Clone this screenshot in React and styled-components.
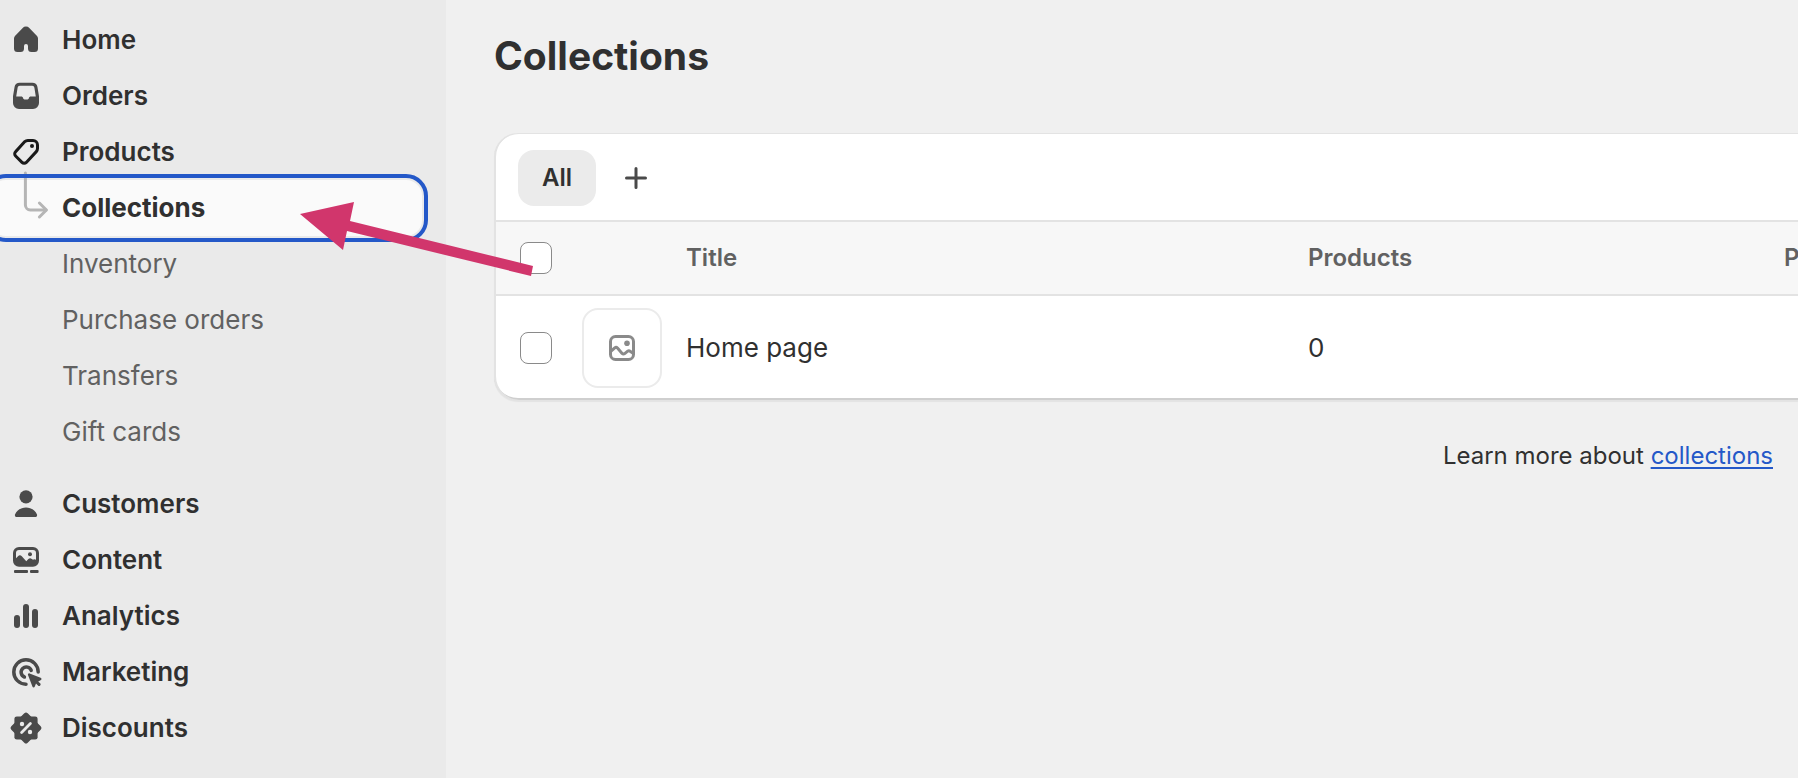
import React from "react";
import styled, { createGlobalStyle } from "styled-components";

const GlobalStyle = createGlobalStyle`
  * {
    box-sizing: border-box;
  }

  body {
    margin: 0;
    background: #f0f0f0;
    color: #303030;
    font-family: Inter, "Liberation Sans", sans-serif;
    font-size: 26px;
    line-height: 40px;
  }
`;

const Page = styled.div`
  position: relative;
  display: flex;
  min-height: 100vh;
  overflow: hidden;
`;

const Sidebar = styled.nav`
  flex: 0 0 446px;
  padding: 12px 24px 20px 0;
  background: #eaeaea;
`;

const NavList = styled.ul`
  margin: 0;
  padding: 0;
  list-style: none;
`;

const SubList = styled(NavList)`
  margin-bottom: 16px;
`;

const NavLink = styled.a`
  display: flex;
  align-items: center;
  gap: 16px;
  height: 56px;
  margin-left: -10px;
  padding-left: 16px;
  border-radius: 16px;
  color: ${props => (props.$sub ? "#616161" : "#303030")};
  font-weight: ${props => (props.$sub ? 400 : 600)};
  text-decoration: none;

  &[aria-current="page"] {
    background: #fafafa;
    color: #303030;
    outline: 4px solid #2458c8;
    outline-offset: 2px;
  }
`;

const SelectedLink = styled(NavLink)`
  font-weight: 700;
`;

const Icon = styled.svg`
  flex: none;
  display: block;
  width: 40px;
  height: 40px;
  overflow: visible;
  color: ${props => props.$color || "#4a4a4a"};
`;

const IconSpace = styled.span`
  flex: none;
  width: 40px;
`;

const Main = styled.main`
  flex: 1;
  min-width: 0;
  padding: 32px 0 0 48px;
`;

const Title = styled.h1`
  margin: 0 0 53px;
  font-size: 39px;
  line-height: 48px;
  font-weight: 700;
`;

const Card = styled.section`
  padding: 1px 0 2px 2px;
  border-radius: 24px 0 0 24px;
  background: #fff;
  box-shadow: inset 1px 1px 0 #e3e3e3, inset 2px 0 0 #e3e3e3,
    inset 0 -2px 0 #cfcfcf, 0 2px 1px rgba(26, 26, 26, 0.06);
`;

const Toolbar = styled.div`
  display: flex;
  align-items: center;
  gap: 20px;
  padding: 16px 22px 14px;
`;

const Tab = styled.button`
  height: 56px;
  padding: 0 24px;
  border: 0;
  border-radius: 16px;
  background: #ebebeb;
  color: #303030;
  font: 600 24px/32px Inter, sans-serif;
`;

const IconButton = styled.button`
  padding: 0;
  border: 0;
  background: none;
`;

const Table = styled.table`
  width: 100%;
  border-collapse: separate;
  border-spacing: 0;
  table-layout: fixed;
`;

const HeadCell = styled.th`
  width: ${props => props.$width || "auto"};
  height: 76px;
  padding: 0;
  border-top: 2px solid #e3e3e3;
  border-bottom: 2px solid #e3e3e3;
  background: #f7f7f7;
  color: #616161;
  font-size: 24px;
  font-weight: 600;
  text-align: left;
  white-space: nowrap;
`;

const Cell = styled.td`
  height: 102px;
  padding: 2px 0 0;
`;

const Checkbox = styled.input`
  appearance: none;
  display: block;
  width: 32px;
  height: 32px;
  margin: 0 0 0 24px;
  border: 1px solid #8a8a8a;
  border-radius: 8px;
  background: #fff;
`;

const Thumbnail = styled.div`
  display: flex;
  align-items: center;
  justify-content: center;
  width: 80px;
  height: 80px;
  border: 2px solid #ebebeb;
  border-radius: 16px;
`;

const Help = styled.p`
  margin: 0;
  padding: 40px 25px 40px 0;
  font-size: 24px;
  line-height: 32px;
  text-align: right;

  a {
    color: #2458c8;
    text-decoration-thickness: 2px;
    text-underline-offset: 3px;
  }
`;

const Arrow = styled.svg`
  position: absolute;
  top: 200px;
  left: 300px;
  width: 236px;
  height: 80px;
  pointer-events: none;
`;

const icons = {
  home: (
    <path
      fill="currentColor"
      d="M8.344 3.992a2.25 2.25 0 0 1 3.312 0l3.854 3.99a1.88 1.88 0 0 1 .49 1.268v5a1.75 1.75 0 0 1-1.75 1.75h-1.5a1.75 1.75 0 0 1-1.75-1.75v-1.25a1 1 0 1 0-2 0v1.25a1.75 1.75 0 0 1-1.75 1.75h-1.5a1.75 1.75 0 0 1-1.75-1.75v-5c0-.47.174-.922.49-1.268z"
    />
  ),
  orders: (
    <path
      fill="currentColor"
      fillRule="evenodd"
      d="M6.8 3.4h6.4c1.3 0 2.3.8 2.5 2l.8 4.7v3.4a3 3 0 0 1-3 3h-7a3 3 0 0 1-3-3v-3.4l.8-4.7c.2-1.2 1.2-2 2.5-2zM6.9 4.9c-.6 0-1 .4-1.1 1l-.7 4.3h2.5c.5 0 .8.3.9.7l.1.4c.1.2.3.4.6.4h1.6c.3 0 .5-.2.6-.4l.1-.4c.1-.4.4-.7.9-.7h2.5l-.7-4.3c-.1-.6-.5-1-1.1-1z"
    />
  ),
  products: (
    <>
      <path
        fill="none"
        stroke="currentColor"
        strokeWidth="1.5"
        d="M9.4 4.8a2.2 2.2 0 0 1 1.5-.6h2.6a2.25 2.25 0 0 1 2.25 2.25v1.85a2.2 2.2 0 0 1-.6 1.5l-5 5.4a1.5 1.5 0 0 1-2.15 0l-3.2-3.2a1.5 1.5 0 0 1 .05-2.2z"
      />
      <circle cx="13" cy="7" r="1" fill="currentColor" />
    </>
  ),
  customers: (
    <g fill="currentColor">
      <circle cx="10" cy="6.4" r="3.3" />
      <path d="M4.5 15.3c.9-2.2 3-3.6 5.5-3.6s4.6 1.4 5.5 3.6c.2.6-.2 1.2-.8 1.2H5.3c-.6 0-1-.6-.8-1.2z" />
    </g>
  ),
  content: (
    <g fill="currentColor">
      <path
        fillRule="evenodd"
        d="M6.5 3.5h7a3 3 0 0 1 3 3v3.9a3 3 0 0 1-3 3h-7a3 3 0 0 1-3-3V6.5a3 3 0 0 1 3-3zM6.5 5A1.5 1.5 0 0 0 5 6.5v2.6l1-1a1.3 1.3 0 0 1 1.9 0l1.9 2.1.4.4.4-.5.6-.6a1.3 1.3 0 0 1 1.7 0l.6.4.3-.2a1.2 1.2 0 0 1 1.2.2V6.5A1.5 1.5 0 0 0 13.500 5z"
      />
      <circle cx="12" cy="7.1" r="1" />
      <rect x="4" y="15" width="7" height="1.5" rx=".5" />
      <rect x="12" y="15" width="4.3" height="1.5" rx=".5" />
    </g>
  ),
  analytics: (
    <g fill="currentColor">
      <rect x="4" y="9.5" width="3" height="6.5" rx="1.5" />
      <rect x="8.5" y="4" width="3" height="12" rx="1.5" />
      <rect x="13" y="6.5" width="3" height="9.5" rx="1.5" />
    </g>
  ),
  marketing: (
    <>
      <g fill="none" stroke="currentColor" strokeWidth="1.75" strokeLinecap="round">
        <path d="M16.1 10a6.1 6.1 0 1 0-6.1 6.1" />
        <path d="M12.6 9.2a2.6 2.600 0 1 0-3.400 3.300" />
      </g>
      <path
        fill="currentColor"
        d="M11.8 10.7l5.5 2.2c.6.2.6 1 0 1.200l-1.200.6 1.100 1.100a.8.8 0 0 1-1.100 1.100l-1.100-1.100-.6 1.500c-.2.6-1 .6-1.200 0l-2.200-5.800c-.2-.5.3-1 .8-.8z"
      />
    </>
  ),
  discounts: (
    <>
      <g fill="currentColor">
        <rect x="4.2" y="4.2" width="11.6" height="11.6" rx="1.2" />
        <rect x="4.2" y="4.2" width="11.6" height="11.6" rx="1.2" transform="rotate(45 10 10)" />
      </g>
      <g fill="#eaeaea">
        <circle cx="8" cy="8" r="1.1" />
        <circle cx="12" cy="12" r="1.1" />
      </g>
      <path d="M7.8 12.2l4.4-4.4" stroke="#eaeaea" strokeWidth="1.4" strokeLinecap="round" />
    </>
  ),
  // runs up out of its box to meet the parent item
  branch: (
    <g fill="none" stroke="currentColor" strokeWidth="1.5" strokeLinecap="round" strokeLinejoin="round">
      <path d="M9.7-7.5V8.5a2.5 2.5 0 0 0 2.5 2.5H20" />
      <path d="M16.7 7.5l3.5 3.5-3.5 3.5" />
    </g>
  ),
  plus: (
    <path d="M10 5.25v9.5M5.25 10h9.5" stroke="currentColor" strokeWidth="1.5" strokeLinecap="round" />
  ),
  image: (
    <>
      <g fill="none" stroke="currentColor" strokeWidth="1.5">
        <rect x="4.25" y="4.25" width="11.5" height="11.5" rx="2.5" />
        <path d="M4.25 11.8l2.100-1.800a1 1 0 0 1 1.400 0l2.300 2.700a1 1 0 0 0 1.300.1l1.500-1.200a1 1 0 0 1 1.200 0l1.700 1.200" />
      </g>
      <circle cx="12.5" cy="7.6" r="1.4" fill="currentColor" />
    </>
  )
};

const Glyph = ({ name, color }) => (
  <Icon viewBox="0 0 20 20" $color={color} aria-hidden="true">
    {icons[name]}
  </Icon>
);

const NavItem = ({ icon, color, children }) => (
  <li>
    <NavLink href="#">
      <Glyph name={icon} color={color} />
      {children}
    </NavLink>
  </li>
);

const SubItem = ({ children }) => (
  <li>
    <NavLink href="#" $sub>
      <IconSpace />
      {children}
    </NavLink>
  </li>
);

const App = () => {
  return (
    <Page>
      <GlobalStyle />
      <Sidebar>
        <NavList>
          <NavItem icon="home">Home</NavItem>
          <NavItem icon="orders">Orders</NavItem>
          <NavItem icon="products" color="#1a1a1a">Products</NavItem>
        </NavList>
        <SubList>
          <li>
            <SelectedLink href="#" aria-current="page">
              <Glyph name="branch" color="#b5b5b5" />
              Collections
            </SelectedLink>
          </li>
          <SubItem>Inventory</SubItem>
          <SubItem>Purchase orders</SubItem>
          <SubItem>Transfers</SubItem>
          <SubItem>Gift cards</SubItem>
        </SubList>
        <NavList>
          <NavItem icon="customers">Customers</NavItem>
          <NavItem icon="content">Content</NavItem>
          <NavItem icon="analytics">Analytics</NavItem>
          <NavItem icon="marketing">Marketing</NavItem>
          <NavItem icon="discounts">Discounts</NavItem>
        </NavList>
      </Sidebar>

      <Main>
        <Title>Collections</Title>
        <Card>
          <Toolbar>
            <Tab type="button">All</Tab>
            <IconButton type="button" aria-label="Create view">
              <Glyph name="plus" />
            </IconButton>
          </Toolbar>
          <Table>
            <thead>
              <tr>
                <HeadCell $width="86px">
                  <Checkbox type="checkbox" aria-label="Select all collections" />
                </HeadCell>
                <HeadCell $width="104px" />
                <HeadCell>Title</HeadCell>
                <HeadCell $width="476px">Products</HeadCell>
                <HeadCell $width="14px">P</HeadCell>
              </tr>
            </thead>
            <tbody>
              <tr>
                <Cell>
                  <Checkbox type="checkbox" aria-label="Select Home page" />
                </Cell>
                <Cell>
                  <Thumbnail>
                    <Glyph name="image" color="#8a8a8a" />
                  </Thumbnail>
                </Cell>
                <Cell>Home page</Cell>
                <Cell>0</Cell>
                <Cell />
              </tr>
            </tbody>
          </Table>
        </Card>
        <Help>
          Learn more about <a href="#">collections</a>
        </Help>
      </Main>

      <Arrow viewBox="0 0 236 80" aria-hidden="true">
        <path fill="#d1366c" d="M0 14L54 2L50 21L233 66L231 76L47 31L43 50Z" />
      </Arrow>
    </Page>
  );
};

export default App;
